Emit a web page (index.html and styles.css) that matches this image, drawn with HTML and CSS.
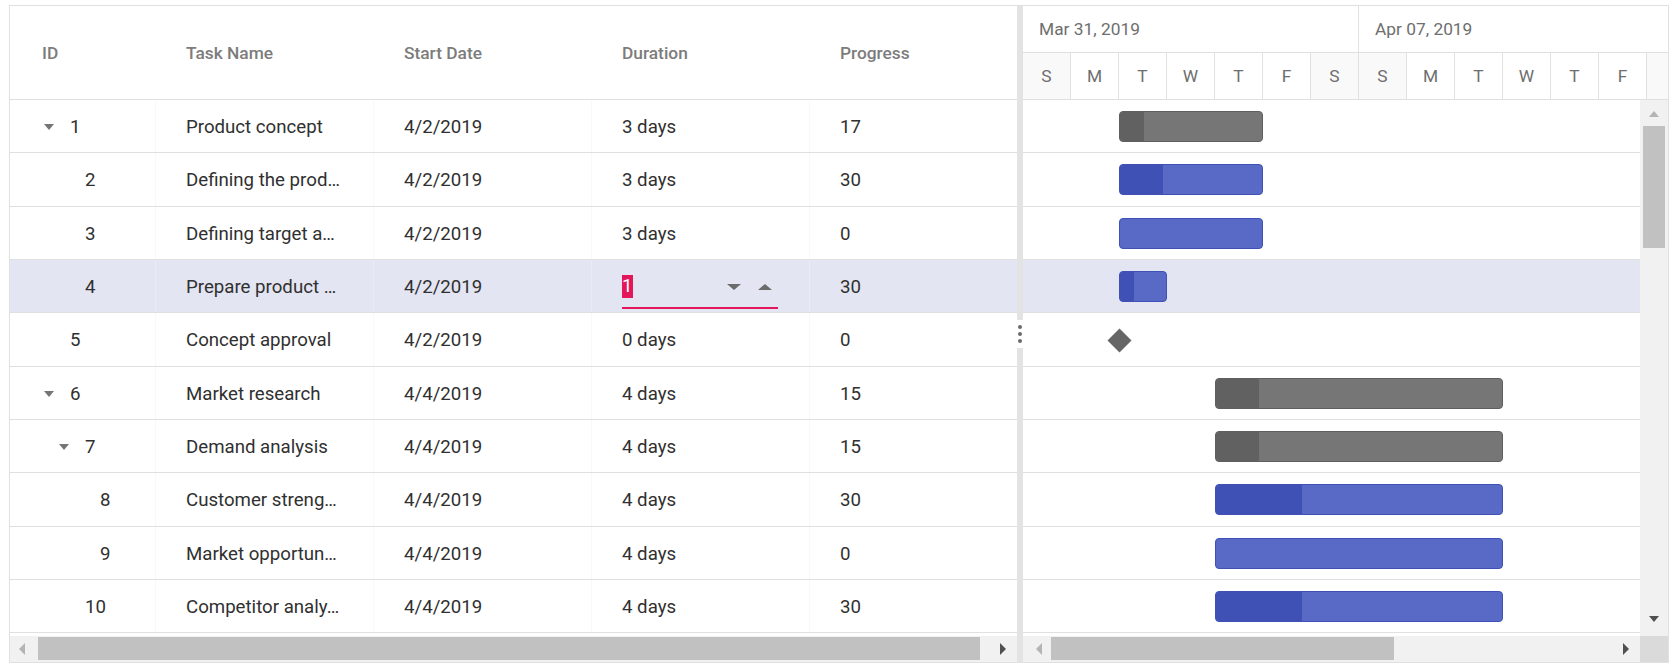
FILE: index.html
```html
<!DOCTYPE html>
<html>
<head>
<meta charset="utf-8">
<link rel="stylesheet" href="styles.css">
</head>
<body>
<div class="gantt">
  <div class="grid-pane">
    <div class="grid-header">
      <div class="hcell hid">ID</div>
      <div class="hcell">Task Name</div>
      <div class="hcell">Start Date</div>
      <div class="hcell">Duration</div>
      <div class="hcell">Progress</div>
    </div>
    <div class="grid-body">
      <div class="row">
        <div class="cell id lvl0"><span class="toggle open"></span><span>1</span></div>
        <div class="cell">Product concept</div>
        <div class="cell">4/2/2019</div>
        <div class="cell">3 days</div>
        <div class="cell">17</div>
      </div>
      <div class="row">
        <div class="cell id lvl1"><span class="toggle"></span><span>2</span></div>
        <div class="cell">Defining the prod…</div>
        <div class="cell">4/2/2019</div>
        <div class="cell">3 days</div>
        <div class="cell">30</div>
      </div>
      <div class="row">
        <div class="cell id lvl1"><span class="toggle"></span><span>3</span></div>
        <div class="cell">Defining target a…</div>
        <div class="cell">4/2/2019</div>
        <div class="cell">3 days</div>
        <div class="cell">0</div>
      </div>
      <div class="row selected">
        <div class="cell id lvl1"><span class="toggle"></span><span>4</span></div>
        <div class="cell">Prepare product …</div>
        <div class="cell">4/2/2019</div>
        <div class="cell editing">
          <div class="edit">
            <span class="sel">1</span>
            <span class="spacer"></span>
            <span class="spin down"></span>
            <span class="spin up"></span>
          </div>
        </div>
        <div class="cell">30</div>
      </div>
      <div class="row">
        <div class="cell id lvl0"><span class="toggle"></span><span>5</span></div>
        <div class="cell">Concept approval</div>
        <div class="cell">4/2/2019</div>
        <div class="cell">0 days</div>
        <div class="cell">0</div>
      </div>
      <div class="row">
        <div class="cell id lvl0"><span class="toggle open"></span><span>6</span></div>
        <div class="cell">Market research</div>
        <div class="cell">4/4/2019</div>
        <div class="cell">4 days</div>
        <div class="cell">15</div>
      </div>
      <div class="row">
        <div class="cell id lvl1"><span class="toggle open"></span><span>7</span></div>
        <div class="cell">Demand analysis</div>
        <div class="cell">4/4/2019</div>
        <div class="cell">4 days</div>
        <div class="cell">15</div>
      </div>
      <div class="row">
        <div class="cell id lvl2"><span class="toggle"></span><span>8</span></div>
        <div class="cell">Customer streng…</div>
        <div class="cell">4/4/2019</div>
        <div class="cell">4 days</div>
        <div class="cell">30</div>
      </div>
      <div class="row">
        <div class="cell id lvl2"><span class="toggle"></span><span>9</span></div>
        <div class="cell">Market opportun…</div>
        <div class="cell">4/4/2019</div>
        <div class="cell">4 days</div>
        <div class="cell">0</div>
      </div>
      <div class="row">
        <div class="cell id lvl1"><span class="toggle"></span><span>10</span></div>
        <div class="cell">Competitor analy…</div>
        <div class="cell">4/4/2019</div>
        <div class="cell">4 days</div>
        <div class="cell">30</div>
      </div>
    </div>
    <div class="hscroll grid-hscroll">
      <div class="sbtn gl-left"><span class="tri-left light"></span></div>
      <div class="thumb grid-thumb"></div>
      <div class="sfill"></div>
      <div class="sbtn gl-right"><span class="tri-right"></span></div>
    </div>
  </div>

  <div class="splitter">
    <div class="grip"><span class="dot"></span><span class="dot"></span><span class="dot"></span></div>
  </div>

  <div class="chart-pane">
    <div class="chart-header">
      <div class="tier tier-top">
        <div class="week">Mar 31, 2019</div>
        <div class="week">Apr 07, 2019</div>
      </div>
      <div class="tier tier-days">
        <div class="day we">S</div>
        <div class="day">M</div>
        <div class="day">T</div>
        <div class="day">W</div>
        <div class="day">T</div>
        <div class="day">F</div>
        <div class="day we">S</div>
        <div class="day we">S</div>
        <div class="day">M</div>
        <div class="day">T</div>
        <div class="day">W</div>
        <div class="day">T</div>
        <div class="day">F</div>
        <div class="day we"></div>
      </div>
    </div>
    <div class="chart-main">
      <div class="chart-body">
        <div class="crow"><div class="bar parent" style="left:96px;width:144px"><div class="prog" style="width:17%"></div></div></div>
        <div class="crow"><div class="bar" style="left:96px;width:144px"><div class="prog" style="width:30%"></div></div></div>
        <div class="crow"><div class="bar" style="left:96px;width:144px"><div class="prog" style="width:0%"></div></div></div>
        <div class="crow selected"><div class="bar" style="left:96px;width:48px"><div class="prog" style="width:30%"></div></div></div>
        <div class="crow"><div class="milestone" style="left:88px"></div></div>
        <div class="crow"><div class="bar parent" style="left:192px;width:288px"><div class="prog" style="width:15%"></div></div></div>
        <div class="crow"><div class="bar parent" style="left:192px;width:288px"><div class="prog" style="width:15%"></div></div></div>
        <div class="crow"><div class="bar" style="left:192px;width:288px"><div class="prog" style="width:30%"></div></div></div>
        <div class="crow"><div class="bar" style="left:192px;width:288px"><div class="prog" style="width:0%"></div></div></div>
        <div class="crow"><div class="bar" style="left:192px;width:288px"><div class="prog" style="width:30%"></div></div></div>
      </div>
      <div class="vscroll">
        <div class="vbtn vtop"><span class="tri-up light"></span></div>
        <div class="vthumb"></div>
        <div class="sfill"></div>
        <div class="vbtn vbottom"><span class="tri-down"></span></div>
      </div>
    </div>
    <div class="chart-hscroll">
      <div class="hscroll chart-track">
        <div class="sbtn cl-left"><span class="tri-left light"></span></div>
        <div class="thumb chart-thumb"></div>
        <div class="sfill"></div>
        <div class="sbtn cl-right"><span class="tri-right"></span></div>
      </div>
      <div class="corner"></div>
    </div>
  </div>
</div>
</body>
</html>
```

FILE: styles.css
```css
html, body {
  margin: 0;
  padding: 0;
  background: #ffffff;
}

body {
  font-family: Roboto, "Noto Sans", "Liberation Sans", sans-serif;
}

.gantt {
  margin: 5px 0 0 9px;
  width: 1660px;
  height: 658px;
  box-sizing: border-box;
  border: 1px solid #e0e0e0;
  display: flex;
  overflow: hidden;
}

/* ---------- grid pane ---------- */
.grid-pane {
  width: 1007px;
  flex: none;
  display: flex;
  flex-direction: column;
}

.grid-header {
  height: 94px;
  flex: none;
  box-sizing: border-box;
  border-bottom: 1px solid #e0e0e0;
  display: grid;
  grid-template-columns: 145px 218px 218px 218px 208px;
  align-items: center;
  color: #7c7c7c;
  font-size: 17.33px;
  font-weight: 500;
}

.hcell {
  padding-left: 31px;
  padding-top: 1px;
  white-space: nowrap;
}

.hcell.hid {
  padding-left: 32px;
}

.grid-body {
  height: 536px;
  flex: none;
}

.row {
  height: 53.33px;
  box-sizing: border-box;
  border-bottom: 1px solid #e0e0e0;
  display: grid;
  grid-template-columns: 145px 218px 218px 218px 208px;
  font-size: 18.67px;
  color: #303030;
}

.row.selected {
  background: #e3e5f3;
}

.cell {
  display: flex;
  align-items: center;
  padding-left: 30px;
  padding-top: 2px;
  border-left: 1px solid #f9f9f9;
  white-space: nowrap;
  overflow: hidden;
}

.row.selected .cell {
  border-left-color: #e8eaf5;
}

.cell.id {
  border-left: none;
  padding-left: 32px;
}

.cell.id.lvl1 {
  padding-left: 47px;
}

.cell.id.lvl2 {
  padding-left: 62px;
}

.toggle {
  width: 28px;
  flex: none;
  display: flex;
  align-items: center;
}

.toggle.open::before {
  content: "";
  display: block;
  margin-left: 2px;
  width: 0;
  height: 0;
  border-left: 5.5px solid transparent;
  border-right: 5.5px solid transparent;
  border-top: 6px solid #757575;
}

/* edit cell */
.cell.editing {
  padding-right: 31px;
  padding-top: 0;
}

.edit {
  flex: 1;
  align-self: flex-end;
  margin-bottom: 3px;
  height: 40px;
  box-sizing: border-box;
  border-bottom: 2px solid #e3165b;
  padding-bottom: 3px;
  padding-right: 6px;
  display: flex;
  align-items: center;
}

.sel {
  background: #e3165b;
  color: #ffffff;
  line-height: 23px;
}

.spacer {
  flex: 1;
}

.spin {
  width: 0;
  height: 0;
  border-left: 7px solid transparent;
  border-right: 7px solid transparent;
}

.spin.down {
  border-top: 6px solid #6b6b6b;
  margin-right: 17px;
}

.spin.up {
  border-bottom: 6px solid #6b6b6b;
}

/* ---------- scrollbars ---------- */
.hscroll {
  height: 26px;
  flex: none;
  background: #f1f1f1;
  display: flex;
  align-items: flex-start;
}

.sbtn {
  height: 26px;
  flex: none;
  display: flex;
  align-items: center;
}

.gl-left {
  width: 28px;
  padding-left: 9px;
  box-sizing: border-box;
}

.gl-right {
  width: 37px;
  padding-left: 20px;
  box-sizing: border-box;
}

.thumb {
  height: 23px;
  margin-top: 1px;
  background: #c1c1c1;
  flex: none;
}

.grid-thumb {
  width: 942px;
}

.sfill {
  flex: 1;
}

.tri-left {
  width: 0;
  height: 0;
  border-top: 6px solid transparent;
  border-bottom: 6px solid transparent;
  border-right: 6px solid #505050;
}

.tri-right {
  width: 0;
  height: 0;
  border-top: 6px solid transparent;
  border-bottom: 6px solid transparent;
  border-left: 6px solid #505050;
}

.tri-up {
  width: 0;
  height: 0;
  border-left: 5px solid transparent;
  border-right: 5px solid transparent;
  border-bottom: 6px solid #505050;
}

.tri-down {
  width: 0;
  height: 0;
  border-left: 5px solid transparent;
  border-right: 5px solid transparent;
  border-top: 6px solid #505050;
}

.tri-left.light {
  border-right-color: #b4b4b4;
}

.tri-up.light {
  border-bottom-color: #b4b4b4;
}

/* ---------- splitter ---------- */
.splitter {
  width: 6px;
  flex: none;
  background: #e3e3e3;
  display: flex;
  flex-direction: column;
  justify-content: center;
}

.grip {
  height: 28px;
  background: #ffffff;
  display: flex;
  flex-direction: column;
  align-items: center;
  justify-content: center;
  gap: 3px;
}

.dot {
  width: 4px;
  height: 4px;
  border-radius: 50%;
  background: #6b6b6b;
}

/* ---------- chart pane ---------- */
.chart-pane {
  width: 645px;
  flex: none;
  display: flex;
  flex-direction: column;
}

.chart-header {
  height: 94px;
  flex: none;
  overflow: hidden;
  color: #6e6e6e;
  font-size: 17.33px;
}

.tier {
  height: 47px;
  box-sizing: border-box;
  border-bottom: 1px solid #e0e0e0;
  display: flex;
}

.week {
  width: 336px;
  flex: none;
  box-sizing: border-box;
  border-right: 1px solid #e0e0e0;
  padding-left: 16px;
  display: flex;
  align-items: center;
  white-space: nowrap;
}

.day {
  width: 48px;
  flex: none;
  box-sizing: border-box;
  border-right: 1px solid #e0e0e0;
  display: flex;
  align-items: center;
  justify-content: center;
}

.day.we {
  background: #f9f9f9;
}

.chart-main {
  height: 536px;
  flex: none;
  display: flex;
}

.chart-body {
  width: 617px;
  flex: none;
}

.crow {
  position: relative;
  height: 53.33px;
  box-sizing: border-box;
  border-bottom: 1px solid #e0e0e0;
}

.crow.selected {
  background: #e3e5f3;
}

.bar {
  position: absolute;
  top: 11px;
  height: 31px;
  box-sizing: border-box;
  border: 1px solid #3f51b5;
  background: #5869c6;
  border-radius: 4px;
  overflow: hidden;
}

.bar .prog {
  height: 100%;
  background: #3f51b5;
}

.bar.parent {
  border-color: #5f5f5f;
  background: #767676;
}

.bar.parent .prog {
  background: #616161;
}

.milestone {
  position: absolute;
  top: 18.5px;
  width: 17px;
  height: 17px;
  background: #666666;
  transform: rotate(45deg);
}

.vscroll {
  width: 28px;
  flex: none;
  background: #f1f1f1;
  display: flex;
  flex-direction: column;
  align-items: center;
}

.vbtn {
  height: 26px;
  flex: none;
  display: flex;
  align-items: center;
  justify-content: center;
  width: 100%;
}

.vtop {
  height: 26px;
  padding-top: 1px;
  box-sizing: border-box;
}

.vbottom {
  margin-bottom: 4px;
}

.vthumb {
  width: 22px;
  height: 122px;
  flex: none;
  background: #c1c1c1;
}

.chart-hscroll {
  height: 26px;
  flex: none;
  display: flex;
}

.chart-track {
  flex: 1;
}

.cl-left {
  width: 28px;
  padding-left: 13px;
  box-sizing: border-box;
}

.cl-right {
  width: 28px;
  padding-left: 11px;
  box-sizing: border-box;
}

.chart-thumb {
  width: 343px;
}

.corner {
  width: 28px;
  flex: none;
  background: #dadada;
}
```
